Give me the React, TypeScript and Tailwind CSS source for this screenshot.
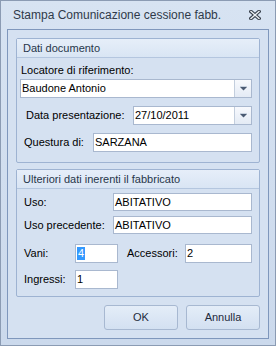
import React from "react";

const font = { fontFamily: '"Liberation Sans", Arial, sans-serif' };

function DropArrow() {
  return (
    <div className="w-[17px] h-full border-l border-[#c3cedd] bg-gradient-to-b from-[#f7f9fd] to-[#e4ebf5] flex items-center justify-center">
      <svg width="7" height="5" viewBox="0 0 7 5">
        <rect x="0" y="0" width="7" height="1" fill="#c9d3e0" />
        <path d="M0 1 H7 L3.5 4.5 Z" fill="#4b5b73" />
      </svg>
    </div>
  );
}

function Combo({ value, w }: { value: string; w: string }) {
  return (
    <div className={`${w} shrink-0 h-[19px] border border-[#a9b8cf] bg-white flex`}>
      <div className="flex-1 pl-[1px] leading-[17px] text-[11px] text-black">{value}</div>
      <DropArrow />
    </div>
  );
}

function Field({ value, w, h = "h-[19px]", selected = false }: { value: string; w: string; h?: string; selected?: boolean }) {
  return (
    <div className={`${w} ${h} shrink-0 border border-[#a9b8cf] bg-white flex items-center pl-[1px] text-[11px] text-black`}>
      {selected ? <span className="bg-[#3399ff] text-white px-[1px] leading-[13px]">{value}</span> : value}
    </div>
  );
}

function GroupHeader({ title }: { title: string }) {
  return (
    <div className="h-[19px] border-b border-[#b4c6df] bg-gradient-to-b from-[#e6eef9] to-[#d9e5f4] pl-[6px] leading-[18px] text-[11px] text-[#27364a]">
      {title}
    </div>
  );
}

export default function App() {
  return (
    <div style={font} className="w-[276px] h-[346px] border border-[#8b9bb3] bg-gradient-to-b from-[#d7e3f2] to-[#cbd9ec] flex flex-col">
      {/* Title bar */}
      <div className="h-[28px] shrink-0 flex items-center justify-between pl-[12px] pr-[14px]">
        <span className="text-[12px] text-[#2f3a4a]">Stampa Comunicazione cessione fabb.</span>
        <svg width="12" height="10" viewBox="0 0 12 10">
          <path d="M2 1.5 L10 8.5 M10 1.5 L2 8.5" stroke="#39414d" strokeWidth="3.6" strokeLinecap="square" />
          <path d="M2 1.5 L10 8.5 M10 1.5 L2 8.5" stroke="#eef1f5" strokeWidth="1.4" strokeLinecap="square" />
        </svg>
      </div>

      {/* Content panel */}
      <div className="mx-[6px] h-[310px] border border-[#7f97bc] bg-[#d5e1f1] flex flex-col px-[8px] pt-[8px]">
        {/* Dati documento */}
        <div className="h-[125px] border border-[#9eb3d2] rounded-[2px] flex flex-col">
          <GroupHeader title="Dati documento" />
          <div className="flex flex-col pl-[3px]">
            <div className="mt-[6px] h-[13px] leading-[13px] text-[11px] text-black pl-[1px]">Locatore di riferimento:</div>
            <div className="mt-[2px]">
              <Combo value="Baudone Antonio" w="w-[232px]" />
            </div>
            <div className="mt-[8px] flex items-center">
              <span className="w-[113px] shrink-0 pl-[6px] text-[11px] text-black">Data presentazione:</span>
              <Combo value="27/10/2011" w="w-[119px]" />
            </div>
            <div className="mt-[8px] flex items-center">
              <span className="w-[73px] shrink-0 pl-[4px] text-[11px] text-black">Questura di:</span>
              <Field value="SARZANA" w="w-[159px]" />
            </div>
          </div>
        </div>

        {/* Ulteriori dati */}
        <div className="mt-[6px] h-[128px] border border-[#9eb3d2] rounded-[2px] flex flex-col">
          <GroupHeader title="Ulteriori dati inerenti il fabbricato" />
          <div className="flex flex-col pl-[7px] text-[11px] text-black">
            <div className="mt-[4px] flex items-center">
              <span className="w-[89px] shrink-0">Uso:</span>
              <Field value="ABITATIVO" w="w-[139px]" h="h-[18px]" />
            </div>
            <div className="mt-[5px] flex items-center">
              <span className="w-[89px] shrink-0">Uso precedente:</span>
              <Field value="ABITATIVO" w="w-[139px]" h="h-[18px]" />
            </div>
            <div className="mt-[10px] flex items-center">
              <span className="w-[51px] shrink-0">Vani:</span>
              <Field value="4" w="w-[43px]" selected />
              <span className="w-[67px] shrink-0 pl-[9px]">Accessori:</span>
              <Field value="2" w="w-[67px]" />
            </div>
            <div className="mt-[7px] flex items-center">
              <span className="w-[51px] shrink-0">Ingressi:</span>
              <Field value="1" w="w-[43px]" />
            </div>
          </div>
        </div>

        {/* Buttons */}
        <div className="mt-[8px] flex justify-end gap-[8px]">
          <button className="w-[74px] h-[25px] border border-[#a7b8d1] rounded-[3px] bg-gradient-to-b from-[#e4edf8] to-[#d3e0f1] text-[11px] text-[#1d2a3c]">
            OK
          </button>
          <button className="w-[74px] h-[25px] border border-[#a7b8d1] rounded-[3px] bg-gradient-to-b from-[#e4edf8] to-[#d3e0f1] text-[11px] text-[#1d2a3c]">
            Annulla
          </button>
        </div>
      </div>
    </div>
  );
}
